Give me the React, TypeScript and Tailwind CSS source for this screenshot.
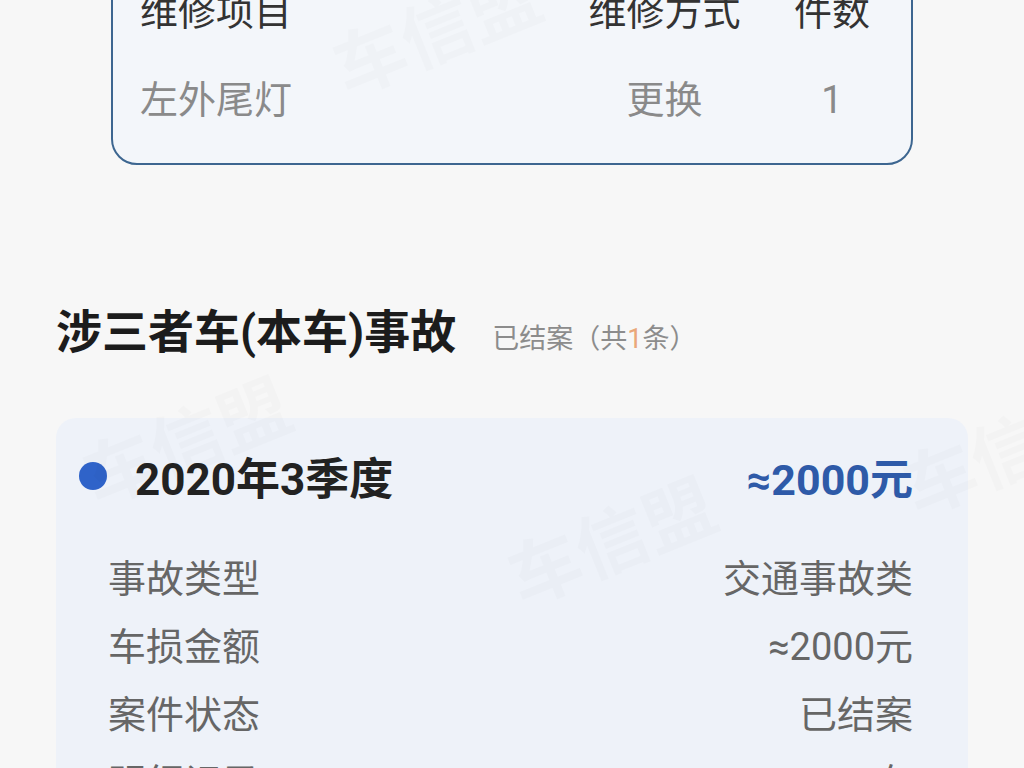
const font = { fontFamily: 'Roboto, "Noto Sans CJK SC", "Noto Sans", sans-serif' };

type Row = { label: string; value: string };

const rows: Row[] = [
  { label: "事故类型", value: "交通事故类" },
  { label: "车损金额", value: "≈2000元" },
  { label: "案件状态", value: "已结案" },
  { label: "明细记录", value: "有" },
];

function Watermark({ className }: { className: string }) {
  return (
    <span
      aria-hidden="true"
      className={`pointer-events-none absolute select-none whitespace-nowrap text-[72px] font-bold text-black/[0.015] ${className}`}
    >
      车信盟
    </span>
  );
}

function RepairTable() {
  return (
    <div className="mx-[111px] -mt-[60px] rounded-[26px] border-2 border-[#3d6690] bg-[#f3f6fa] pt-[46px] pb-[39px] pl-[27px] pr-[41px]">
      <div className="flex h-[48px] items-center whitespace-nowrap text-[38px] leading-[48px] text-[#333]">
        <span className="flex-1">维修项目</span>
        <span className="w-[155px] shrink-0 text-center">维修方式</span>
        <span className="ml-[52px] w-[76px] shrink-0 text-center">件数</span>
      </div>
      <div className="mt-[40px] flex h-[48px] items-center whitespace-nowrap text-[38px] leading-[48px] text-[#8a8a8a]">
        <span className="flex-1">左外尾灯</span>
        <span className="w-[155px] shrink-0 text-center">更换</span>
        <span className="ml-[52px] w-[76px] shrink-0 text-center">1</span>
      </div>
    </div>
  );
}

function AccidentCard() {
  return (
    <div className="mt-[56px] rounded-[20px] bg-[#eef2f9] pt-[34px] pb-[20px] pl-[23px] pr-[55px]">
      <div className="flex h-[56px] items-center">
        <span className="h-[28px] w-[28px] shrink-0 -translate-y-[4px] rounded-full bg-[#2f63c9]" />
        <span className="ml-[28px] flex-1 text-[44px] font-bold leading-[56px] text-[#222]">
          2020年3季度
        </span>
        <span className="text-[43px] font-bold leading-[56px] text-[#2e5aa8]">≈2000元</span>
      </div>
      <div className="mt-[37px] pl-[29px]">
        {rows.map((r) => (
          <div
            key={r.label}
            className="flex h-[68px] items-center justify-between text-[38px] leading-[68px] text-[#666]"
          >
            <span>{r.label}</span>
            <span>{r.value}</span>
          </div>
        ))}
      </div>
    </div>
  );
}

export default function App() {
  return (
    <div className="relative h-[768px] overflow-hidden bg-[#f7f7f7]" style={font}>
      <RepairTable />

      <div className="px-14">
        <div className="mt-[137px] flex h-[60px] items-baseline">
          <h2 className="text-[46px] font-bold leading-[60px] text-[#1c1c1c]">
            涉三者车(本车)事故
          </h2>
          <span className="ml-[36px] text-[27px] text-[#8c8c8c]">
            已结案（共<span className="text-[#eaa77a]">1</span>条）
          </span>
        </div>

        <AccidentCard />
      </div>

      <Watermark className="left-[330px] -top-[20px] -rotate-[22deg]" />
      <Watermark className="left-[80px] top-[390px] -rotate-[22deg]" />
      <Watermark className="left-[505px] top-[490px] -rotate-[22deg]" />
      <Watermark className="left-[900px] top-[400px] -rotate-[22deg]" />
    </div>
  );
}
